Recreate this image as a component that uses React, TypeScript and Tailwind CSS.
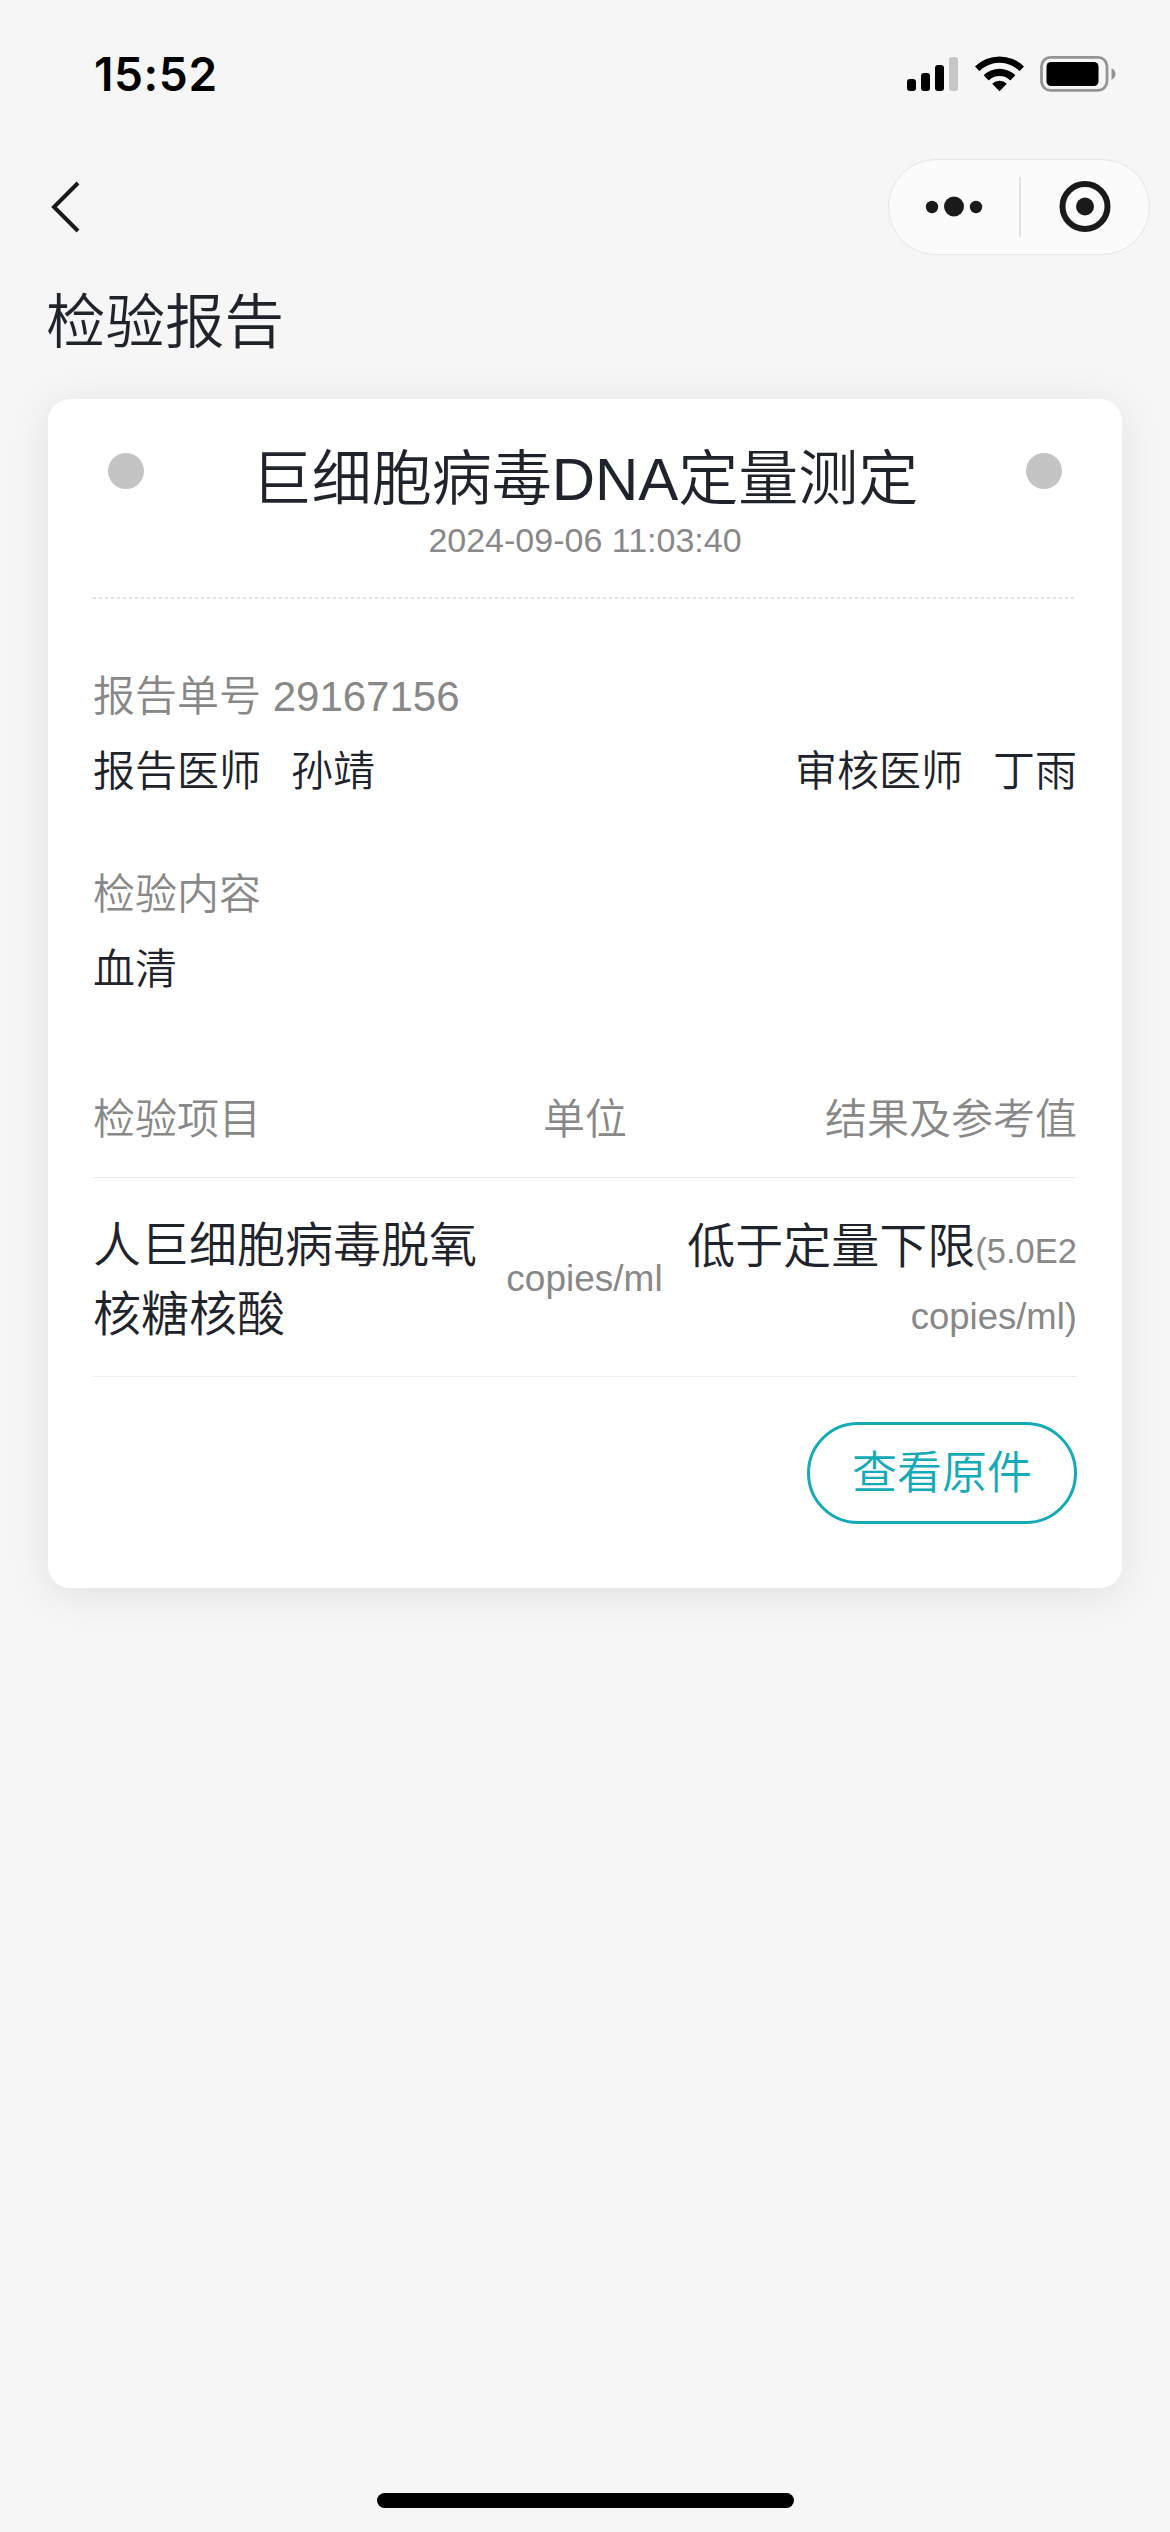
import type { ReactNode } from 'react';

const report = {
    title: '巨细胞病毒DNA定量测定',
    time: '2024-09-06 11:03:40',
    no: '29167156',
    doctor: '孙靖',
    reviewer: '丁雨',
    sample: '血清',
    items: [
        { name: '人巨细胞病毒脱氧核糖核酸', unit: 'copies/ml', result: '低于定量下限', range: ['(5.0E2', 'copies/ml)'] },
    ],
};

const StatusBar = () => (
    <div className="flex h-[141px] items-start justify-between pl-[94px] pr-[54px] pt-[50px]">
        <span className="font-['Inter',sans-serif] text-[46px] font-semibold leading-[48px] tracking-[0.6px] text-black">15:52</span>
        <div className="flex pt-[5px]">
            <svg width="52" height="37" viewBox="0 0 52 37">
                <rect x="0" y="24" width="9" height="12" rx="3" />
                <rect x="14" y="18" width="9" height="18" rx="3" />
                <rect x="28" y="10" width="9" height="26" rx="3" />
                <rect x="42" y="2" width="9" height="34" rx="3" fill="#c6c6c6" />
            </svg>
            <svg className="ml-4" width="49" height="37" viewBox="0 0 49 37">
                <path d="M0 11.5a35 35 0 0 1 49 0l-4.4 4.6a28.6 28.6 0 0 0-40.2 0z" />
                <path d="M8.7 20.2a22.6 22.6 0 0 1 31.6 0l-5 5.2a15.6 15.6 0 0 0-21.6 0z" />
                <path d="M17.2 28.8a10.4 10.4 0 0 1 14.6 0l-7.3 7.4z" />
            </svg>
            <svg className="ml-4" width="76" height="37" viewBox="0 0 76 37">
                <rect x="1.5" y="2.3" width="65.5" height="33" rx="9" fill="none" stroke="#949494" strokeWidth="2.8" />
                <rect x="6.5" y="7" width="52" height="24" rx="4.5" />
                <path d="M71.5 13.2q4 2 4 5.8t-4 5.8z" fill="#949494" />
            </svg>
        </div>
    </div>
);

const NavBar = () => (
    <div className="flex h-[132px] items-start justify-between pl-[51px] pr-[20px] pt-[18px]">
        <svg className="mt-[22px]" width="30" height="52" viewBox="0 0 30 52" fill="none" stroke="#1a1a1a" strokeWidth="4">
            <path d="M27 2L3 26l24 24" />
        </svg>
        <div className="flex h-[96px] w-[262px] items-center rounded-full border border-[#e6e6e6] bg-[#fbfbfb]">
            <svg className="w-[130px]" height="60" viewBox="0 0 130 60" fill="#1a1a1a">
                <circle cx="43" cy="30" r="6.2" />
                <circle cx="65" cy="29.5" r="10" />
                <circle cx="87" cy="30" r="6.2" />
            </svg>
            <div className="h-[60px] w-[2px] bg-[#e3e3e3]" />
            <svg className="w-[128px]" height="60" viewBox="0 0 128 60">
                <circle cx="64" cy="29.5" r="22.5" fill="none" stroke="#1a1a1a" strokeWidth="6" />
                <circle cx="64" cy="29.5" r="9" fill="#1a1a1a" />
            </svg>
        </div>
    </div>
);

const Label = ({ children }: { children: ReactNode }) => (
    <p className="text-[42px] leading-[75px] text-[#888888]">{children}</p>
);

export default function App() {
    return (
        <div className="flex h-[2532px] w-[1170px] flex-col bg-[#f6f6f6] font-['Liberation_Sans','Noto_Sans_CJK_SC',sans-serif] font-[350] text-[#1f232b]">
            <StatusBar />
            <NavBar />

            <h1 className="ml-[46px] h-[126px] pt-[3px] text-[59.5px] font-[350] leading-[94px]">检验报告</h1>

            <main className="mx-[48px] flex h-[1189px] flex-col rounded-[22px] bg-white px-[45px] shadow-[0_6px_44px_rgba(0,0,0,0.09)]">
                <header className="flex h-[198px] items-start justify-between px-[15px] pt-[36px]">
                    <span className="mt-[18px] size-[36px] rounded-full bg-[#c4c4c4]" />
                    <div className="pt-[3px] text-center">
                        <h2 className="text-[60px] font-[350] leading-[84px]">{report.title}</h2>
                        <p className="-mt-[3px] text-[34px] leading-[42px] text-[#888888]">{report.time}</p>
                    </div>
                    <span className="mt-[18px] size-[36px] rounded-full bg-[#c4c4c4]" />
                </header>
                <div className="h-[2px] bg-[repeating-linear-gradient(90deg,#e4e4e4_0_3px,transparent_3px_6px)]" />

                <section className="mt-[60px]">
                    <Label>报告单号 {report.no}</Label>
                    <div className="flex justify-between text-[42px] leading-[75px]">
                        <p className="flex gap-[30px]"><span>报告医师</span><span>{report.doctor}</span></p>
                        <p className="flex gap-[30px]"><span>审核医师</span><span>{report.reviewer}</span></p>
                    </div>
                </section>

                <section className="mt-[48px]">
                    <Label>检验内容</Label>
                    <p className="text-[42px] leading-[75px]">{report.sample}</p>
                </section>

                <section className="mt-[75px]">
                    <div className="grid grid-cols-3 border-b border-[#ececec] pb-[20px]">
                        <Label>检验项目</Label>
                        <div className="text-center"><Label>单位</Label></div>
                        <div className="text-right"><Label>结果及参考值</Label></div>
                    </div>
                    {report.items.map((item) => (
                        <div key={item.name} className="flex h-[199px] items-center justify-between border-b border-[#ececec]">
                            <p className="w-[391px] pt-[5px] text-[48px] leading-[69px]">{item.name}</p>
                            <p className="pt-[3px] text-[37px] text-[#888888]">{item.unit}</p>
                            <div className="w-[392px] pt-[10px] text-right leading-[66px]">
                                <p className="whitespace-nowrap text-[48px]">
                                    {item.result}
                                    <span className="text-[34.5px] text-[#888888]">{item.range[0]}</span>
                                </p>
                                <p className="text-[36.5px] text-[#888888]">{item.range[1]}</p>
                            </div>
                        </div>
                    ))}
                </section>

                <button className="mt-[45px] h-[102px] w-[270px] self-end rounded-full border-[3px] border-[#14abb7] pt-[2px] text-[45px] font-[350] leading-[94px] text-[#14abb7]">
                    查看原件
                </button>
            </main>

            <div className="mx-auto mb-[24px] mt-auto h-[15px] w-[417px] rounded-full bg-black" />
        </div>
    );
}
